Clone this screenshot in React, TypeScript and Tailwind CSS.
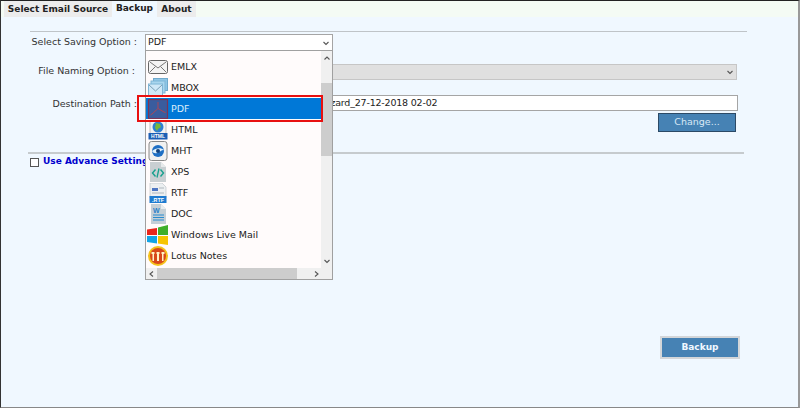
const font = { fontFamily: '"DejaVu Sans", Verdana, sans-serif' };

function Chevron({ up = false, dir }: { up?: boolean; dir?: 'l' | 'r' }) {
  const d = dir === 'l' ? 'M5 1.5 2 4l3 2.5' : dir === 'r' ? 'M3 1.5 6 4 3 6.5' : up ? 'M1.5 5.5 4 3l2.5 2.5' : 'M1.5 3 4 5.5 6.5 3';
  return (
    <svg width="8" height="8" viewBox="0 0 8 8" fill="none" stroke="#555" strokeWidth="1.1">
      <path d={d} />
    </svg>
  );
}

const box = 'h-5 w-[22px] shrink-0';

const EmlxIcon = () => (
  <svg className={box} viewBox="0 0 22 20" fill="none">
    <rect x="1.500" y="3.500" width="19" height="13" rx="2" fill="#f4f4f4" stroke="#666" />
    <path d="M3 5l8 6 8-6M3 15l5.500-5.500M19 15l-5.500-5.500" stroke="#777" />
  </svg>
);
const MboxIcon = () => (
  <svg className={box} viewBox="0 0 22 20" fill="none">
    <rect x="6.500" y="0.500" width="14" height="12" fill="#8fc6e6" stroke="#6fa9cc" />
    <rect x="4" y="3" width="14" height="12" fill="#a9d6ee" stroke="#7fb5d6" />
    <rect x="1.500" y="6" width="14" height="12" fill="#cfe8f7" stroke="#7fb5d6" />
    <path d="M2 7l6.500 6 6.500-6" stroke="#7a9fb5" />
  </svg>
);
const PdfIcon = () => (
  <svg className={box} viewBox="0 0 22 20" fill="none">
    <rect x="1.500" y="0.500" width="19" height="19" fill="#3a5c9e" stroke="#7a3558" strokeWidth="1.200" />
    <path d="M11 3v6.500M11 9.500l-6 5.500M11 9.500l6 3.500M5 15l-1.500 1M17 13l1.500 .5" stroke="#b8434f" strokeWidth="0.900" />
  </svg>
);
const HtmlIcon = () => (
  <svg className={box} viewBox="0 0 22 20">
    <rect x="3" y="0" width="16" height="14" fill="#f2f2f2" stroke="#999" strokeWidth="0.600" />
    <circle cx="11" cy="7" r="5.500" fill="#2f7fd0" />
    <path d="M9 3l4 1 1 3-3 2-1 2-2-3Z" fill="#78b83c" />
    <rect x="1.500" y="13" width="19" height="6.500" fill="#1c5fb5" />
    <text x="11" y="18.400" textAnchor="middle" fontSize="5" fontWeight="700" fill="#fff" fontFamily="Liberation Sans">HTML</text>
  </svg>
);
const MhtIcon = () => (
  <svg className={box} viewBox="0 0 22 20">
    <rect x="2" y="0.500" width="18" height="19" rx="2.500" fill="#f1f1f1" stroke="#888" />
    <circle cx="11" cy="10" r="6" fill="#1f6fc4" />
    <path d="M5 10c3-3 9-4 12-1-3 0-4 2-7 3-2 .5-4 0-5-2Z" fill="#dff0fb" />
    <circle cx="11" cy="10" r="2" fill="#12427e" />
  </svg>
);
const XpsIcon = () => (
  <svg className={box} viewBox="0 0 22 20" fill="none">
    <path d="M3 0h11l5 5v15H3Z" fill="#c9cfd2" />
    <path d="M14 0v5h5Z" fill="#e7eaeb" />
    <path d="M8.500 7.500 5.500 11l3 3.500M13.500 7.500l3 3.500-3 3.500" stroke="#18a08e" strokeWidth="1.400" />
    <path d="M12 6.500l-2 9" stroke="#18a08e" strokeWidth="1.300" />
  </svg>
);
const RtfIcon = () => (
  <svg className={box} viewBox="0 0 22 20">
    <path d="M3 0h12l4 4v11H3Z" fill="#eceff1" stroke="#b5bcc2" strokeWidth="0.600" />
    <rect x="5" y="5" width="6" height="3" fill="#4e76c2" />
    <path d="M12 5h5M5 10h12" stroke="#aeb6bd" />
    <rect x="2.500" y="13" width="17" height="7" fill="#1e7bd0" />
    <text x="11" y="18.600" textAnchor="middle" fontSize="5.400" fontWeight="700" fill="#fff" fontFamily="Liberation Sans">.RTF</text>
  </svg>
);
const DocIcon = () => (
  <svg className={box} viewBox="0 0 22 20">
    <path d="M4 0h10l5 5v15H4Z" fill="#c5cfd6" />
    <path d="M14 0v5h5Z" fill="#e7ecef" />
    <text x="6" y="8.500" fontSize="7" fontWeight="700" fill="#2a7fc9" fontFamily="Liberation Sans">W</text>
    <path d="M6 11h11M6 13.500h11M6 16h11" stroke="#2a8ccf" strokeWidth="1.100" />
  </svg>
);
const WinIcon = () => (
  <svg className={box} viewBox="0 0 22 20">
    <path d="M0 4.500 10 3v7H0Z" fill="#e8261c" />
    <path d="M11 2.500 21 0v10H11Z" fill="#3fae2a" />
    <path d="M0 11h10v7.500L0 17Z" fill="#12a4e6" />
    <path d="M11 11h10v9L11 18.500Z" fill="#f6c500" />
  </svg>
);
const LotusIcon = () => (
  <svg className={box} viewBox="0 0 22 20">
    <circle cx="11" cy="10" r="10" fill="#f5c21b" />
    <circle cx="11" cy="10" r="8" fill="#d8481a" />
    <path d="M4.500 6h3v2H7v7H5.500V8h-1ZM9.500 6h3v2H12v7h-2V8h-.5ZM14.500 6h3v2h-1v7H15V8h-.5Z" fill="#fff3c4" />
  </svg>
);

const options: [string, () => JSX.Element, boolean?][] = [
  ['EMLX', EmlxIcon],
  ['MBOX', MboxIcon],
  ['PDF', PdfIcon, true],
  ['HTML', HtmlIcon],
  ['MHT', MhtIcon],
  ['XPS', XpsIcon],
  ['RTF', RtfIcon],
  ['DOC', DocIcon],
  ['Windows Live Mail', WinIcon],
  ['Lotus Notes', LotusIcon],
];

function Dropdown() {
  return (
    <div className="absolute left-[144px] top-[49px] z-10 h-[230px] w-[188px] border border-[#a0a0a0] bg-[#fffbfb]">
      <div className="flex h-[217px]">
        <div className="flex w-[175px] flex-col pt-[5px]">
          {options.map(([name, Icon, sel]) => (
            <div
              key={name}
              className={`flex h-[21px] shrink-0 items-center gap-[2px] pl-[1px] text-[9.5px] leading-none ${sel ? 'bg-[#0078d7] text-[#d9ecfb]' : 'text-[#222]'}`}
            >
              <Icon />
              <span>{name}</span>
            </div>
          ))}
        </div>
        <div className="flex w-[11px] flex-col bg-[#f0f0f0]">
          <div className="flex h-[14px] items-center justify-center"><Chevron up /></div>
          <div className="mt-[18px] h-[73px] bg-[#cdcdcd]" />
          <div className="flex-1" />
          <div className="flex h-[14px] items-center justify-center"><Chevron /></div>
        </div>
      </div>
      <div className="flex h-[11px] items-center bg-[#f0f0f0]">
        <div className="flex w-[11px] justify-center"><Chevron dir="l" /></div>
        <div className="h-full w-[140px] bg-[#cdcdcd]" />
        <div className="ml-[13px] flex w-[11px] justify-center"><Chevron dir="r" /></div>
      </div>
    </div>
  );
}

export default function App() {
  return (
    <div style={font} className="relative flex h-[408px] w-[800px] flex-col overflow-hidden border-t border-l border-r-2 border-b border-t-[#222] border-l-[#333] border-r-[#999] border-b-[#888] bg-[#f0f8ff] text-[9.5px] text-[#333]">
      <div className="flex h-[16px] items-stretch bg-[#f4fbf4] pl-[3px] text-[9px] font-bold leading-none whitespace-nowrap text-[#222]">
        <div className="flex w-[108px] items-center justify-center bg-[#ececec]">Select Email Source</div>
        <div className="flex w-[45px] items-center justify-center bg-[#f0f8ff] pb-[2px]">Backup</div>
        <div className="flex w-[39px] items-center justify-center bg-[#ececec]">About</div>
      </div>

      <div className="ml-[29px] mt-[14px] h-px w-[717px] bg-[#bfc4c8]" />

      <div className="mt-[2px] flex h-[17px] items-center">
        <div className="w-[136px] shrink-0 text-right">Select Saving Option :</div>
        <div className="ml-[8px] flex h-[17px] w-[188px] items-center justify-between border border-[#a5a5a5] bg-white pl-[2px] pr-[2px]">
          <span className="text-[#222]">PDF</span><Chevron />
        </div>
      </div>

      <div className="mt-[12px] flex h-[17px] items-center">
        <div className="w-[134px] shrink-0 text-right">File Naming Option :</div>
        <div className="ml-[10px] flex h-[16px] w-[592px] items-center justify-end border border-[#c6c6c6] bg-[#e0e0e0] pr-[2px]"><Chevron /></div>
      </div>

      <div className="mt-[15px] flex h-[17px] items-start">
        <div className="w-[136px] shrink-0 text-right leading-[18px]">Destination Path :</div>
        <div className="ml-[8px] flex h-[16px] w-[593px] items-center border border-[#a5a5a5] bg-white pl-[173px]">
          <span className="tracking-[-0.2px] text-[#222]">Wizard_27-12-2018 02-02</span>
        </div>
      </div>

      <div className="ml-[657px] mt-[1px] flex h-[19px] w-[78px] items-center justify-center border border-[#2c4a66] bg-[#4682b4] text-[#d8e8f4]">Change...</div>

      <div className="ml-[27px] mt-[20px] h-[2px] w-[716px] bg-[#c6cbce]" />

      <div className="ml-[29px] mt-[2px] flex h-[12px] items-center gap-[4px]">
        <div className="h-[9px] w-[9px] border border-[#555] bg-white" />
        <span className="text-[9px] font-bold text-[#0000cd]">Use Advance Settings</span>
      </div>

      <div className="ml-[659px] mt-[168px] flex h-[23px] w-[80px] items-center justify-center border-2 border-[#d3d6d9] bg-[#4682b4] text-[9px] font-bold text-[#f0f8ff]">Backup</div>

      <Dropdown />
      <div className="absolute left-[136px] top-[94px] z-20 h-[27px] w-[186px] border-2 border-[#e81010]" />
    </div>
  );
}
